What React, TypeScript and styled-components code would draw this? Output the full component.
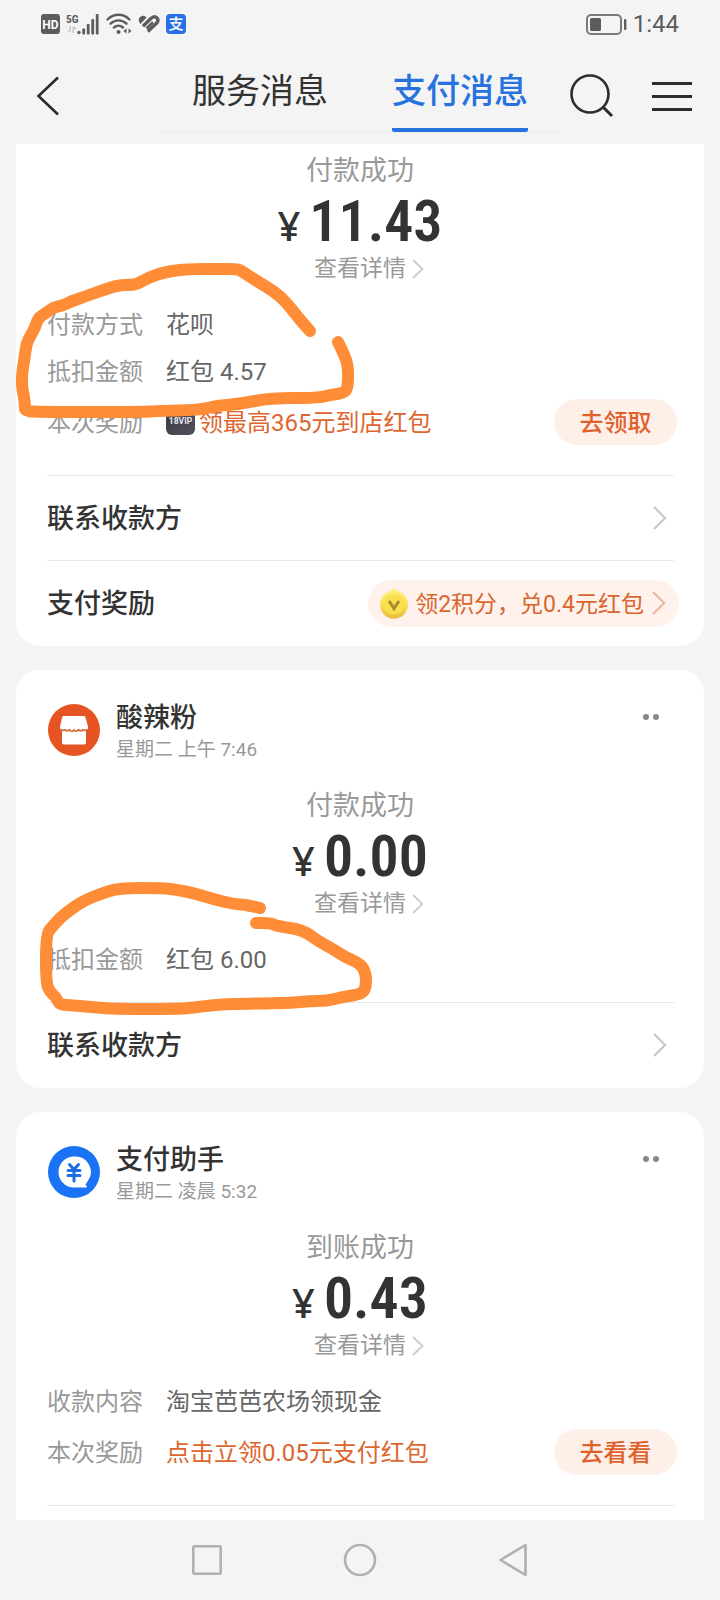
import React from "react";
import styled, { createGlobalStyle } from "styled-components";

const GlobalStyle = createGlobalStyle`
  * { box-sizing: border-box; }
  body {
    margin: 0;
    background: #f4f4f4;
    color: #333;
    font-family: Roboto, "Noto Sans CJK SC", sans-serif;
  }
  button { border: 0; padding: 0; background: none; font: inherit; color: inherit; cursor: pointer; }
  a { color: inherit; text-decoration: none; }
  svg { display: block; flex: none; }
  h2, p, dl, dd, ul { margin: 0; padding: 0; }
`;

const Page = styled.div`
  min-height: 100vh;
  display: flex;
  flex-direction: column;
`;

const StatusBar = styled.div`
  display: flex;
  justify-content: space-between;
  align-items: center;
  height: 48px;
  padding: 0 41px;
  color: #5c5c5c;
`;

const StatusGroup = styled.div<{ $gap: number }>`
  display: flex;
  align-items: center;
  gap: ${(p) => p.$gap}px;
`;

const AppBadge = styled.span`
  width: 20px;
  height: 20px;
  border-radius: 4px;
  background: #2970e8;
  color: #fff;
  font-size: 15px;
  font-weight: 500;
  line-height: 20px;
  text-align: center;
`;

const Clock = styled.span`
  font-size: 24px;
  line-height: 48px;
`;

const Header = styled.header`
  display: grid;
  grid-template-columns: 1fr auto 1fr;
  align-items: center;
  height: 96px;
  color: #2c2c2c;
`;

const BackButton = styled.button`
  justify-self: start;
  padding-left: 36px;
`;

const Tabs = styled.nav`
  display: flex;
  gap: 64px;
  padding: 8px 32px 0;
  border-bottom: 1px solid #ececec;
`;

const Tab = styled.a<{ $active?: boolean }>`
  padding-bottom: 13px;
  border-bottom: 4px solid ${(p) => (p.$active ? "#2672de" : "transparent")};
  border-radius: 2px;
  color: ${(p) => (p.$active ? "#2672de" : "#333")};
  font-size: 34px;
  font-weight: ${(p) => (p.$active ? 500 : 400)};
  line-height: 48px;
`;

const HeaderActions = styled.div`
  display: flex;
  justify-content: space-between;
  align-items: center;
  padding: 0 28px 0 10px;
`;

const Feed = styled.main`
  flex: 1;
  display: flex;
  flex-direction: column;
  gap: 24px;
  padding: 0 16px;
`;

const Card = styled.article<{ $cut?: "top" | "bottom" }>`
  position: relative;
  padding: ${(p) => (p.$cut === "top" ? "8px 0 1px" : p.$cut === "bottom" ? "34px 0 14px" : "34px 0 1px")};
  border-radius: ${(p) => (p.$cut === "top" ? "0 0 24px 24px" : p.$cut === "bottom" ? "24px 24px 0 0" : "24px")};
  background: #fff;
`;

const CardHeader = styled.header`
  display: flex;
  align-items: flex-start;
  gap: 16px;
  height: 83px;
  padding: 0 45px 0 32px;
`;

const Sender = styled.div`
  flex: 1;
`;

const SenderName = styled.h2`
  font-size: 27px;
  font-weight: 500;
  line-height: 28px;
`;

const SentAt = styled.p`
  padding-top: 6px;
  color: #999;
  font-size: 19px;
  line-height: 24px;
`;

const MoreButton = styled.button`
  padding: 10px 0;
`;

const Summary = styled.section`
  display: flex;
  flex-direction: column;
  align-items: center;
  padding: 1px 0 15px;
  color: #999;
`;

const Outcome = styled.p`
  font-size: 27px;
  line-height: 36px;
`;

const Amount = styled.p`
  display: flex;
  align-items: baseline;
  gap: 9px;
  height: 64px;
  color: #333;
  font-family: "Roboto Condensed", Roboto, sans-serif;
  font-size: 58px;
  font-weight: 600;
  line-height: 64px;
`;

const Currency = styled.span`
  font-family: "Noto Sans", Roboto, sans-serif;
  font-size: 40px;
  font-weight: 500;
  line-height: 40px;
`;

const DetailLink = styled.a`
  display: flex;
  align-items: center;
  gap: 6px;
  padding-left: 18px;
  font-size: 23px;
  line-height: 32px;
`;

const Facts = styled.dl`
  padding: 0 27px 20px 31px;
  font-size: 24px;
`;

const Fact = styled.div<{ $reward?: boolean }>`
  display: flex;
  align-items: center;
  height: ${(p) => (p.$reward ? 55 : 47)}px;
  margin-bottom: ${(p) => (p.$reward ? 6 : 0)}px;
`;

const FactLabel = styled.dt`
  width: 119px;
  padding-bottom: 2px;
  color: #999;
`;

const FactValue = styled.dd<{ $reward?: boolean }>`
  flex: 1;
  display: flex;
  align-items: center;
  gap: 4px;
  padding-bottom: 2px;
  color: ${(p) => (p.$reward ? "#dd662e" : "#666")};
`;

const RewardButton = styled.button`
  width: 123px;
  height: 46px;
  padding-bottom: 2px;
  border-radius: 23px;
  background: #ffefe9;
  color: #e0602a;
  font-weight: 500;
`;

const Links = styled.ul`
  list-style: none;
`;

const Divider = styled.hr`
  height: 1px;
  margin: 0 30px 0 31px;
  border: 0;
  background: #e8e8e8;
`;

const LinkRow = styled.a`
  display: flex;
  justify-content: space-between;
  align-items: center;
  height: 84px;
  padding: 0 25px 0 31px;
  font-size: 27px;
  font-weight: 500;
`;

const RowTitle = styled.span`
  padding-bottom: 3px;
`;

const RowEnd = styled.span`
  padding-right: 12px;
`;

const PointsPill = styled.span`
  display: flex;
  align-items: center;
  height: 47px;
  padding: 0 13px 0 12px;
  border-radius: 24px;
  background: #fff2ec;
  color: #d9652f;
  font-size: 23px;
  font-weight: 400;
`;

const PillText = styled.span`
  padding: 0 8px 2px 7px;
`;

const Scribble = styled.svg`
  position: absolute;
  top: 0;
  left: 0;
  overflow: visible;
  pointer-events: none;
`;

const SystemNav = styled.nav`
  display: grid;
  grid-template-columns: repeat(3, 153px);
  justify-content: center;
  height: 80px;
`;

const NavButton = styled.button`
  display: flex;
  align-items: center;
  justify-content: center;
`;

function Chevron({ size, color }: { size: "small" | "large"; color: string }) {
  return size === "small" ? (
    <svg width="12" height="20" viewBox="0 0 12 20" fill="none" stroke={color} strokeWidth="1.800">
      <path d="M1 1 10.500 10 1 19" />
    </svg>
  ) : (
    <svg width="14" height="24" viewBox="0 0 14 24" fill="none" stroke={color} strokeWidth="2.200">
      <path d="M1 1 12.200 12 1 23" />
    </svg>
  );
}

function SignalIcons() {
  return (
    <>
      <svg width="19" height="20" viewBox="0 0 19 20">
        <rect width="19" height="20" rx="3" fill="#5c5c5c" />
        <text x="9.500" y="14.500" textAnchor="middle" fontFamily="Roboto" fontWeight="700" fontSize="12" fill="#fff">HD</text>
      </svg>
      <svg width="34" height="22" viewBox="0 0 34 22" fill="#5c5c5c">
        <text x="0" y="9.500" fontFamily="Roboto Condensed" fontWeight="700" fontSize="11.500">5G</text>
        <path d="M3.500 13v5H5v-5zM1 17h3.500v3zM6.500 14v6H8v-6zM8 13v3h3z" fill="#c4c4c4" />
        <circle cx="13" cy="19.500" r="1.700" />
        <rect x="16.300" y="15.500" width="2.800" height="6" rx="1" />
        <rect x="20.800" y="11" width="2.800" height="10.500" rx="1" />
        <rect x="25.300" y="6" width="2.800" height="15.500" rx="1" />
        <rect x="29.800" y="1" width="2.800" height="20.500" rx="1" />
      </svg>
      <svg width="26" height="22" viewBox="0 0 26 22" fill="none" stroke="#5c5c5c" strokeWidth="2.400" strokeLinecap="round">
        <path d="M1.500 6.500C8 .2 17 .2 23.500 6.500M4.500 10.700c4.700-4.500 11.300-4.500 16 0M8 14.500c2.700-2.400 6.300-2.400 9 0" />
        <circle cx="12.500" cy="19" r="2" fill="#5c5c5c" stroke="none" />
        <path d="M20.500 15.500v5l-3.200-2.500zM22.500 15.500v5l3-2.500z" fill="#5c5c5c" stroke="none" />
      </svg>
      <svg width="22" height="18" viewBox="0 0 22 18" fill="none" stroke="#5c5c5c">
        <path d="M2.600 7.800C1.200 5.800 1.400 3.600 3 2.400c1.400-1 3.200-.9 4.400.2z" fill="#5c5c5c" strokeWidth="1.600" />
        <path d="M5 11.200 12.600 3.800c2.100-2 4.500-2.600 6.200-1 1.700 1.700 1.200 4-.8 6L9.800 16.400" strokeWidth="3.400" />
        <path d="m8.600 13.400 6.400-6.200" strokeWidth="2.800" />
      </svg>
      <AppBadge>支</AppBadge>
    </>
  );
}

function BatteryIcon() {
  return (
    <svg width="41" height="21" viewBox="0 0 41 21" fill="none">
      <rect x="1" y="1" width="34" height="19" rx="4" stroke="#7a7a7a" strokeWidth="2" />
      <rect x="4" y="4" width="11" height="13" rx="1.500" fill="#5c5c5c" />
      <rect x="38" y="5" width="2.400" height="11" rx="1" fill="#5c5c5c" />
    </svg>
  );
}

function VipBadge() {
  return (
    <svg width="29" height="29" viewBox="0 0 29 29">
      <defs>
        <linearGradient id="vip" x1="0" y1="0" x2="1" y2="1">
          <stop offset="0" stopColor="#3b3b46" />
          <stop offset="1" stopColor="#50515c" />
        </linearGradient>
      </defs>
      <rect width="29" height="29" rx="6" fill="url(#vip)" />
      <text x="14.500" y="18" textAnchor="middle" fontFamily="Roboto" fontWeight="700" fontSize="8.500" fill="#e8e8ee">18VIP</text>
    </svg>
  );
}

function CoinIcon() {
  return (
    <svg width="28" height="31" viewBox="0 0 28 31">
      <defs>
        <linearGradient id="coin" x1="0" y1="0" x2="0" y2="1">
          <stop offset="0" stopColor="#fff07a" />
          <stop offset=".6" stopColor="#f8dc4e" />
          <stop offset="1" stopColor="#e8b93a" />
        </linearGradient>
      </defs>
      <path d="M14 0c2 3 5.500 3.200 8.500 5.600A14 14 0 1 1 5.500 5.600C8.500 3.200 12 3 14 0z" fill="url(#coin)" />
      <circle cx="14" cy="16.500" r="10" fill="#f9df4d" />
      <path d="m9 13 5 7.500L19 13" fill="none" stroke="#a78a2c" strokeWidth="3" />
    </svg>
  );
}

function ShopAvatar() {
  return (
    <svg width="52" height="52" viewBox="0 0 52 52">
      <circle cx="26" cy="26" r="26" fill="#e65423" />
      <path d="M16 12h19.500c1 0 1.600.4 1.900 1.300L40 22.500c.4 2-.5 3.500-2.200 3.500H14.200c-1.700 0-2.600-1.500-2.200-3.500l2.200-9.200c.2-.9.800-1.300 1.800-1.300z" fill="#fff" />
      <path d="M14 25h24v13.500a2 2 0 0 1-2 2H16a2 2 0 0 1-2-2z" fill="#fff" />
      <path d="M12.500 25.500q2.500 1.500 4.500.3 2.500 2 4.500 0 2.500 3 4.500.3 2.500 2.400 4.500-.3 2.500 2 4.500 0 2.500 1.200 4.500-.3" fill="none" stroke="#d9703f" strokeWidth="1.800" />
    </svg>
  );
}

function AssistantAvatar() {
  return (
    <svg width="52" height="52" viewBox="0 0 52 52">
      <circle cx="26" cy="26" r="26" fill="#1a73f5" />
      <path d="M26 10.500a15.500 15.500 0 1 0 0 31h12c1 0 1.200-.7.600-1.300L37.500 38.500l2-3A15.500 15.500 0 0 0 26 10.500z" fill="#fff" />
      <path d="m21.500 18.500 4.500 5 4.500-5M20 24.500h12M20 29.500h12M26 24.500V35" fill="none" stroke="#1a6fe8" strokeWidth="3" strokeLinecap="round" />
    </svg>
  );
}

function SenderHeader({ avatar, name, time }: { avatar: React.ReactNode; name: string; time: string }) {
  return (
    <CardHeader>
      {avatar}
      <Sender>
        <SenderName>{name}</SenderName>
        <SentAt>{time}</SentAt>
      </Sender>
      <MoreButton aria-label="更多">
        <svg width="16" height="6" viewBox="0 0 16 6" fill="#888">
          <circle cx="3" cy="3" r="3" />
          <circle cx="13" cy="3" r="3" />
        </svg>
      </MoreButton>
    </CardHeader>
  );
}

function PaymentSummary({ outcome, amount }: { outcome: string; amount: string }) {
  return (
    <Summary>
      <Outcome>{outcome}</Outcome>
      <Amount>
        <Currency>¥</Currency>
        {amount}
      </Amount>
      <DetailLink href="#detail">
        查看详情
        <Chevron size="small" color="#ccc" />
      </DetailLink>
    </Summary>
  );
}

function FactRow({ label, children, action }: { label: string; children: React.ReactNode; action?: string }) {
  const reward = Boolean(action);
  return (
    <Fact $reward={reward}>
      <FactLabel>{label}</FactLabel>
      <FactValue $reward={reward}>{children}</FactValue>
      {action && <RewardButton>{action}</RewardButton>}
    </Fact>
  );
}

function ContactRow() {
  return (
    <li>
      <Divider />
      <LinkRow href="#contact">
        <RowTitle>联系收款方</RowTitle>
        <RowEnd>
          <Chevron size="large" color="#c8c8c8" />
        </RowEnd>
      </LinkRow>
    </li>
  );
}

type Point = [number, number];

// Joins the points with quadratic curves through their midpoints, like a pen stroke.
function smoothPath(points: Point[]) {
  const last = points[points.length - 1];
  let d = `M${points[0].join(" ")}`;
  for (let i = 1; i < points.length - 1; i++) {
    const [x, y] = points[i];
    const [nx, ny] = points[i + 1];
    d += `Q${x} ${y} ${(x + nx) / 2} ${(y + ny) / 2}`;
  }
  return `${d}L${last.join(" ")}`;
}

function ScribbleMark({ height, points }: { height: number; points: Point[] }) {
  return (
    <Scribble width="360" height={height} viewBox={`0 0 360 ${height}`} aria-hidden="true">
      <path d={smoothPath(points)} fill="none" stroke="#ff8c36" strokeWidth="12" strokeLinecap="round" strokeLinejoin="round" />
    </Scribble>
  );
}

const firstStroke: Point[] = [
  [294, 187], [285, 177], [274, 163], [264, 152], [251, 143], [239, 136], [227, 128], [222, 125], [204, 125],
  [172, 125], [149, 128], [134, 133], [121, 140], [115, 141], [103, 141], [84, 147], [68, 153], [56, 157],
  [46, 162], [38, 163], [30, 169], [22, 174], [19, 184], [12, 196], [10, 203], [8, 218], [6, 229], [6, 244],
  [8, 252], [9, 262], [9, 267], [24, 268], [129, 268], [139, 267], [184, 266], [199, 262], [224, 260], [254, 254],
  [302, 254], [314, 251], [328, 249], [331, 245], [332, 238], [332, 220], [326, 206], [322, 198],
];

const secondStroke: Point[] = [
  [244, 238], [232, 235], [217, 234], [197, 229], [177, 223], [162, 220], [147, 218], [103, 218], [84, 224],
  [67, 231], [54, 240], [44, 248], [37, 256], [30, 264], [30, 313], [34, 322], [40, 327], [43, 334],
  [50, 335], [64, 336], [97, 339], [167, 339], [189, 336], [211, 334], [274, 333], [294, 331], [311, 331], [326, 327],
  [346, 324], [350, 317], [350, 304], [345, 294], [329, 287], [317, 279], [302, 271], [287, 260], [261, 256],
  [254, 253], [240, 253],
];

export default function App() {
  return (
    <Page>
      <GlobalStyle />
      <StatusBar>
        <StatusGroup $gap={6}>
          <SignalIcons />
        </StatusGroup>
        <StatusGroup $gap={6}>
          <BatteryIcon />
          <Clock>1:44</Clock>
        </StatusGroup>
      </StatusBar>
      <Header>
        <BackButton aria-label="返回">
          <svg width="24" height="40" viewBox="0 0 24 40" fill="none" stroke="#2c2c2c" strokeWidth="2.600">
            <path d="M22 1.500 2.500 20 22 38.500" />
          </svg>
        </BackButton>
        <Tabs>
          <Tab href="#service">服务消息</Tab>
          <Tab href="#payment" $active>支付消息</Tab>
        </Tabs>
        <HeaderActions>
          <button aria-label="搜索">
            <svg width="44" height="44" viewBox="0 0 44 44" fill="none" stroke="#2c2c2c" strokeWidth="2.600">
              <circle cx="20" cy="20" r="18.500" />
              <path d="m33 33 9 9" strokeWidth="3" />
            </svg>
          </button>
          <button aria-label="菜单">
            <svg width="40" height="29" viewBox="0 0 40 29" fill="#2c2c2c">
              <path d="M0 0h40v3H0zM0 13h40v3H0zM0 26h40v3H0z" />
            </svg>
          </button>
        </HeaderActions>
      </Header>

      <Feed>
        <Card $cut="top">
          <PaymentSummary outcome="付款成功" amount="11.43" />
          <Facts>
            <FactRow label="付款方式">花呗</FactRow>
            <FactRow label="抵扣金额">红包 4.57</FactRow>
            <FactRow label="本次奖励" action="去领取">
              <VipBadge />
              领最高365元到店红包
            </FactRow>
          </Facts>
          <Links>
            <ContactRow />
            <li>
              <Divider />
              <LinkRow href="#reward">
                <RowTitle>支付奖励</RowTitle>
                <PointsPill>
                  <CoinIcon />
                  <PillText>领2积分，兑0.4元红包</PillText>
                  <Chevron size="large" color="#e8b9a0" />
                </PointsPill>
              </LinkRow>
            </li>
          </Links>
          <ScribbleMark height={300} points={firstStroke} />
        </Card>

        <Card>
          <SenderHeader avatar={<ShopAvatar />} name="酸辣粉" time="星期二 上午 7:46" />
          <PaymentSummary outcome="付款成功" amount="0.00" />
          <Facts>
            <FactRow label="抵扣金额">红包 6.00</FactRow>
          </Facts>
          <Links>
            <ContactRow />
          </Links>
          <ScribbleMark height={360} points={secondStroke} />
        </Card>

        <Card $cut="bottom">
          <SenderHeader avatar={<AssistantAvatar />} name="支付助手" time="星期二 凌晨 5:32" />
          <PaymentSummary outcome="到账成功" amount="0.43" />
          <Facts>
            <FactRow label="收款内容">淘宝芭芭农场领现金</FactRow>
            <FactRow label="本次奖励" action="去看看">点击立领0.05元支付红包</FactRow>
          </Facts>
          <Divider />
        </Card>
      </Feed>

      <SystemNav>
        <NavButton aria-label="最近任务">
          <svg width="30" height="30" viewBox="0 0 30 30" fill="none" stroke="#b0b0b0" strokeWidth="2.600">
            <rect x="1.300" y="1.300" width="27.400" height="27.400" rx="1" />
          </svg>
        </NavButton>
        <NavButton aria-label="主页">
          <svg width="34" height="34" viewBox="0 0 34 34" fill="none" stroke="#b0b0b0" strokeWidth="2.600">
            <circle cx="17" cy="17" r="15" />
          </svg>
        </NavButton>
        <NavButton aria-label="返回">
          <svg width="28" height="34" viewBox="0 0 28 34" fill="none" stroke="#b0b0b0" strokeWidth="2.600" strokeLinejoin="round">
            <path d="M26.500 2v30L1.500 17z" />
          </svg>
        </NavButton>
      </SystemNav>
    </Page>
  );
}
